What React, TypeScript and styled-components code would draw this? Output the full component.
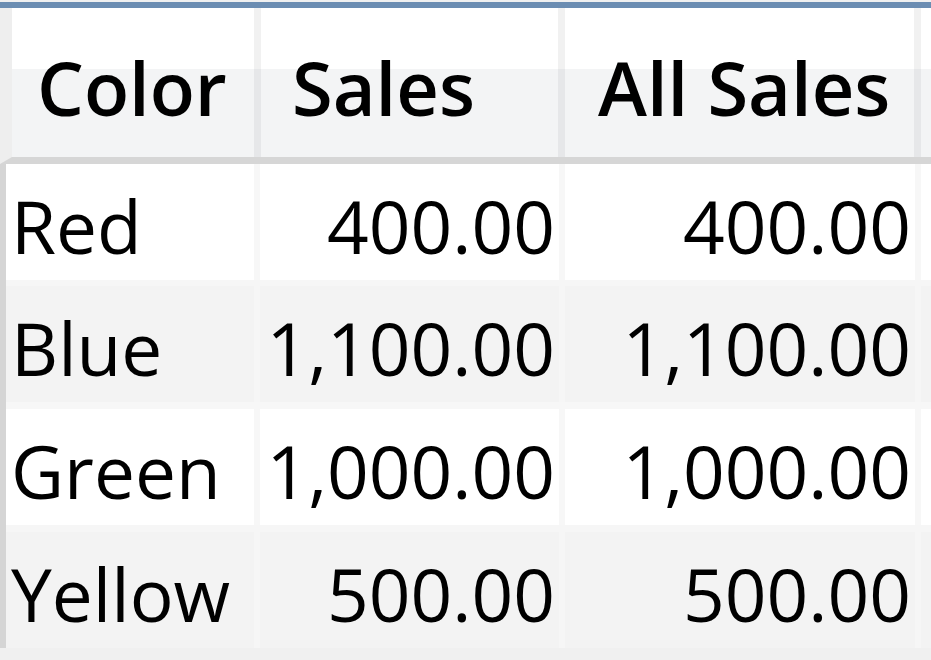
import React from "react";
import styled, { createGlobalStyle } from "styled-components";

const Global = createGlobalStyle`
  html, body { margin: 0; padding: 0; background: #ffffff; }
  body { font-family: "Open Sans", "Noto Sans", sans-serif; color: #000; }
`;

const Page = styled.div`
  width: 931px;
  height: 660px;
  overflow: hidden;
  padding-top: 2px;
  box-sizing: border-box;
  background: #f0f0f0;
  display: flex;
  flex-direction: column;
`;

const TopBar = styled.div`
  height: 6px;
  background: #6b8db2;
  flex: none;
`;

const HeaderRow = styled.div`
  display: grid;
  grid-template-columns: 242px 297px 349px 1fr;
  column-gap: 7px;
  height: 149px;
  border-left: 12px solid #eeeeee;
  border-bottom: 7px solid #d6d6d6;
  background: linear-gradient(#f1f1f1 0 41%, #e6e7e9 41% 100%);
  flex: none;
`;

const HeaderCell = styled.div<{ $pad: number }>`
  display: flex;
  align-items: center;
  padding-left: ${(p) => p.$pad}px;
  padding-top: 10px;
  box-sizing: border-box;
  background: linear-gradient(#ffffff 0 41%, #f3f4f5 41% 100%);
  font-weight: 600;
  font-size: 74px;
  white-space: nowrap;
  overflow: hidden;
`;

const Body = styled.div`
  display: flex;
  flex-direction: column;
  border-left: 6px solid #d5d5d5;
`;

const Row = styled.div<{ $alt: boolean; $gap: number }>`
  display: grid;
  grid-template-columns: 248px 299px 350px 1fr;
  column-gap: 6px;
  padding-top: ${(p) => p.$gap}px;
  background: ${(p) => (p.$alt ? "#f6f6f6" : "#f7f7f7")};
`;

const Cell = styled.div<{ $alt: boolean; $num?: boolean }>`
  height: 116px;
  display: flex;
  align-items: center;
  justify-content: ${(p) => (p.$num ? "flex-end" : "flex-start")};
  padding: ${(p) => (p.$num ? "6px 4px 0 0" : "6px 0 0 5px")};
  box-sizing: border-box;
  background: ${(p) => (p.$alt ? "#f3f3f3" : "#ffffff")};
  font-size: 73px;
  white-space: nowrap;
  overflow: hidden;
`;

const rows = [
  { color: "Red", sales: "400.00", all: "400.00" },
  { color: "Blue", sales: "1,100.00", all: "1,100.00" },
  { color: "Green", sales: "1,000.00", all: "1,000.00" },
  { color: "Yellow", sales: "500.00", all: "500.00" },
];

export default function App() {
  return (
    <>
      <Global />
      <Page>
        <TopBar />
        <HeaderRow>
          <HeaderCell $pad={25}>Color</HeaderCell>
          <HeaderCell $pad={31}>Sales</HeaderCell>
          <HeaderCell $pad={33}>All Sales</HeaderCell>
          <HeaderCell $pad={0} />
        </HeaderRow>
        <Body>
          {rows.map((r, i) => {
            const alt = i % 2 === 1;
            return (
              <Row key={r.color} $alt={alt} $gap={i === 0 ? 0 : i === 1 ? 6 : 7}>
                <Cell $alt={alt}>{r.color}</Cell>
                <Cell $alt={alt} $num>{r.sales}</Cell>
                <Cell $alt={alt} $num>{r.all}</Cell>
                <Cell $alt={alt} />
              </Row>
            );
          })}
        </Body>
      </Page>
    </>
  );
}
